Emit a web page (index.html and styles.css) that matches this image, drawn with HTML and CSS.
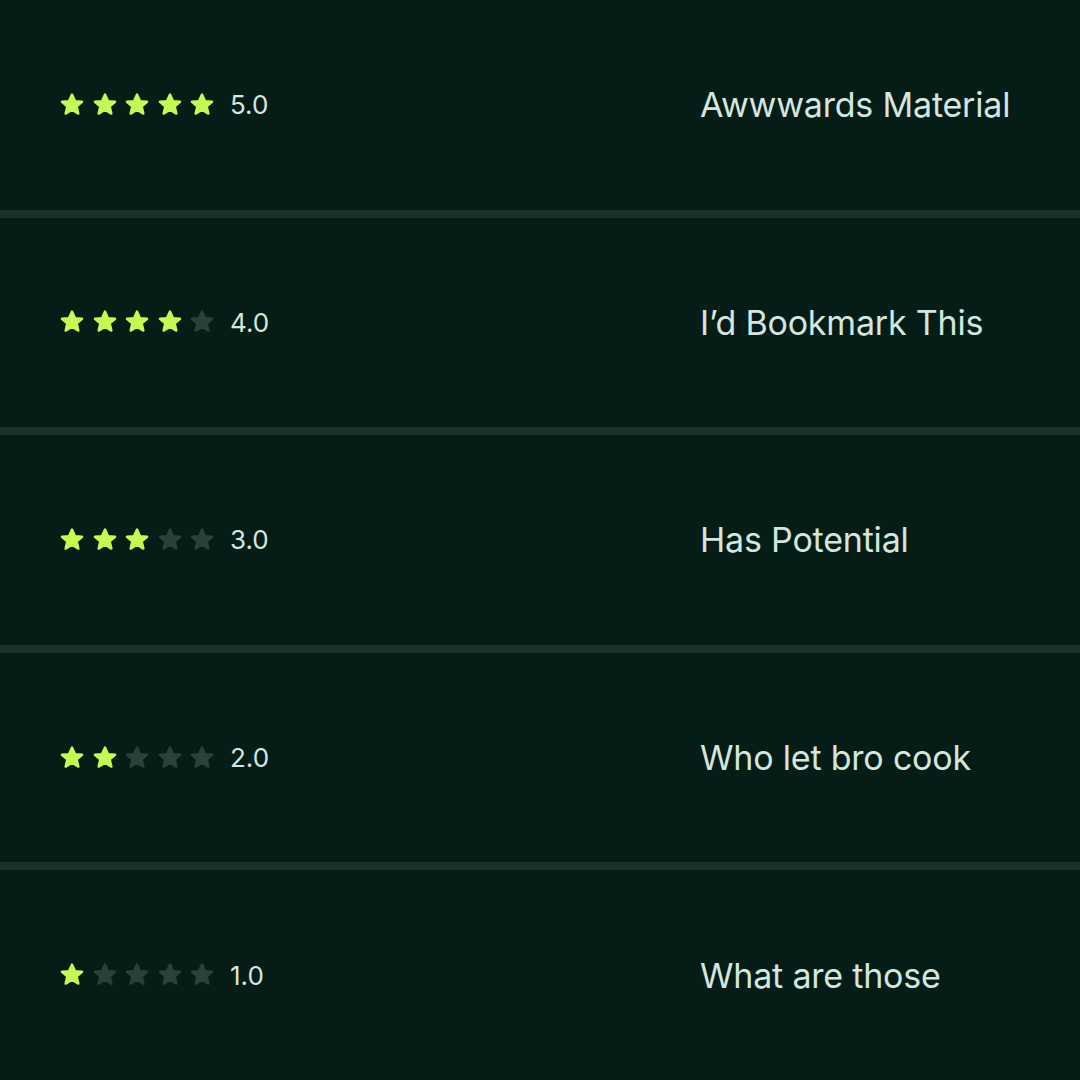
FILE: index.html
```html
<!DOCTYPE html>
<html>
<head>
<meta charset="utf-8">
<link rel="stylesheet" href="styles.css">
</head>
<body>
<svg width="0" height="0" class="defs">
  <defs>
    <path id="star" d="M12 1.6 L14.97 8.1 L22.1 8.75 L16.73 13.45 L18.38 20.6 L12 16.8 L5.62 20.6 L7.27 13.45 L1.9 8.75 L9.03 8.1 Z"/>
  </defs>
</svg>
<main class="list">
  <section class="row">
    <div class="rating">
      <div class="stars">
        <svg class="star on" viewBox="0 0 24 24"><use href="#star"/></svg>
        <svg class="star on" viewBox="0 0 24 24"><use href="#star"/></svg>
        <svg class="star on" viewBox="0 0 24 24"><use href="#star"/></svg>
        <svg class="star on" viewBox="0 0 24 24"><use href="#star"/></svg>
        <svg class="star on" viewBox="0 0 24 24"><use href="#star"/></svg>
      </div>
      <span class="score">5.0</span>
    </div>
    <h2 class="label">Awwwards Material</h2>
  </section>
  <section class="row">
    <div class="rating">
      <div class="stars">
        <svg class="star on" viewBox="0 0 24 24"><use href="#star"/></svg>
        <svg class="star on" viewBox="0 0 24 24"><use href="#star"/></svg>
        <svg class="star on" viewBox="0 0 24 24"><use href="#star"/></svg>
        <svg class="star on" viewBox="0 0 24 24"><use href="#star"/></svg>
        <svg class="star off" viewBox="0 0 24 24"><use href="#star"/></svg>
      </div>
      <span class="score">4.0</span>
    </div>
    <h2 class="label">I’d Bookmark This</h2>
  </section>
  <section class="row">
    <div class="rating">
      <div class="stars">
        <svg class="star on" viewBox="0 0 24 24"><use href="#star"/></svg>
        <svg class="star on" viewBox="0 0 24 24"><use href="#star"/></svg>
        <svg class="star on" viewBox="0 0 24 24"><use href="#star"/></svg>
        <svg class="star off" viewBox="0 0 24 24"><use href="#star"/></svg>
        <svg class="star off" viewBox="0 0 24 24"><use href="#star"/></svg>
      </div>
      <span class="score">3.0</span>
    </div>
    <h2 class="label">Has Potential</h2>
  </section>
  <section class="row">
    <div class="rating">
      <div class="stars">
        <svg class="star on" viewBox="0 0 24 24"><use href="#star"/></svg>
        <svg class="star on" viewBox="0 0 24 24"><use href="#star"/></svg>
        <svg class="star off" viewBox="0 0 24 24"><use href="#star"/></svg>
        <svg class="star off" viewBox="0 0 24 24"><use href="#star"/></svg>
        <svg class="star off" viewBox="0 0 24 24"><use href="#star"/></svg>
      </div>
      <span class="score">2.0</span>
    </div>
    <h2 class="label">Who let bro cook</h2>
  </section>
  <section class="row">
    <div class="rating">
      <div class="stars">
        <svg class="star on" viewBox="0 0 24 24"><use href="#star"/></svg>
        <svg class="star off" viewBox="0 0 24 24"><use href="#star"/></svg>
        <svg class="star off" viewBox="0 0 24 24"><use href="#star"/></svg>
        <svg class="star off" viewBox="0 0 24 24"><use href="#star"/></svg>
        <svg class="star off" viewBox="0 0 24 24"><use href="#star"/></svg>
      </div>
      <span class="score">1.0</span>
    </div>
    <h2 class="label">What are those</h2>
  </section>
</main>
</body>
</html>
```
FILE: styles.css
```css
html, body {
  margin: 0;
  padding: 0;
  background: #061c17;
}
.defs {
  position: absolute;
  width: 0;
  height: 0;
}
.list {
  height: 1080px;
  display: flex;
  flex-direction: column;
  gap: 8px;
  background: #1a3129;
  font-family: Inter, "Liberation Sans", sans-serif;
  color: #d3e6df;
}
.row {
  flex: 1;
  background: #061c17;
  display: grid;
  grid-template-columns: 640px 1fr;
  align-items: center;
  padding-left: 60px;
}
.rating {
  display: flex;
  align-items: center;
  gap: 16px;
}
.stars {
  display: flex;
  gap: 8.5px;
}
.star {
  width: 24px;
  height: 24px;
  display: block;
  overflow: visible;
}
.star use {
  stroke-width: 2.4;
  stroke-linejoin: round;
}
.star.on {
  fill: #c6fa52;
  stroke: #c6fa52;
}
.star.off {
  fill: #2c403a;
  stroke: #2c403a;
}
.score {
  font-size: 26px;
  font-weight: 400;
  letter-spacing: 0;
}
.label {
  margin: 0;
  font-size: 34px;
  font-weight: 400;
  letter-spacing: -0.2px;
}
```
